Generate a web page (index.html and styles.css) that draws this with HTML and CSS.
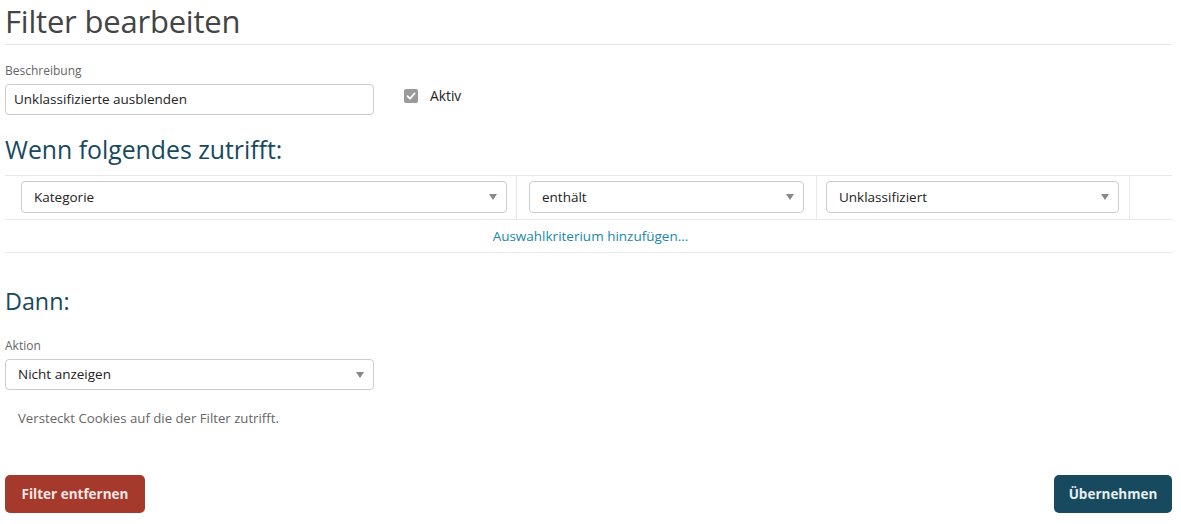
FILE: index.html
```html
<!DOCTYPE html>
<html lang="de">
<head>
<meta charset="utf-8">
<link rel="stylesheet" href="styles.css">
</head>
<body>
<div class="page">
  <h1 class="title">Filter bearbeiten</h1>

  <div class="desc-row">
    <div class="field desc-field">
      <label class="label">Beschreibung</label>
      <div class="input">Unklassifizierte ausblenden</div>
    </div>
    <div class="check">
      <span class="box"><svg width="10" height="10" viewBox="0 0 10 10"><path d="M1.5 5.2 L4 7.6 L8.6 2.4" fill="none" stroke="#fff" stroke-width="1.8" stroke-linecap="round" stroke-linejoin="round"/></svg></span>
      <span class="check-label">Aktiv</span>
    </div>
  </div>

  <h2 class="section when">Wenn folgendes zutrifft:</h2>

  <div class="criteria">
    <div class="crit-row">
      <div class="cell c1"><div class="select">Kategorie<span class="caret"></span></div></div>
      <div class="cell c2"><div class="select">enthält<span class="caret"></span></div></div>
      <div class="cell c3"><div class="select">Unklassifiziert<span class="caret"></span></div></div>
      <div class="cell c4"></div>
    </div>
    <div class="add-row"><span class="link">Auswahlkriterium hinzufügen...</span></div>
  </div>

  <h2 class="section then">Dann:</h2>

  <div class="field action-field">
    <label class="label">Aktion</label>
    <div class="select action">Nicht anzeigen<span class="caret"></span></div>
  </div>

  <p class="help">Versteckt Cookies auf die der Filter zutrifft.</p>

  <div class="buttons">
    <button class="btn danger">Filter entfernen</button>
    <button class="btn primary">Übernehmen</button>
  </div>
</div>
</body>
</html>
```

FILE: styles.css
```css
* { box-sizing: border-box; }
html, body { margin: 0; padding: 0; background: #fff; }
body {
  font-family: "Open Sans", "Noto Sans", "DejaVu Sans", sans-serif;
  color: #222;
}
.page {
  margin-left: 5px;
  width: 1167px;
}
.title {
  margin: 0;
  padding-top: 3px;
  height: 45px;
  font-size: 31px;
  font-weight: 400;
  color: #444;
  line-height: 36px;
  border-bottom: 1px solid #e6e6e6;
  letter-spacing: -0.2px;
}
.desc-row {
  display: flex;
  align-items: flex-start;
  margin-top: 18px;
}
.field { display: flex; flex-direction: column; }
.desc-field { width: 369px; }
.label {
  font-size: 12px;
  color: #666;
  line-height: 16px;
  margin-bottom: 5px;
}
.input {
  height: 31px;
  border: 1px solid #ccc;
  border-radius: 4px;
  padding: 0 8px;
  font-size: 13.5px;
  line-height: 29px;
  color: #222;
}
.check {
  display: flex;
  align-items: center;
  margin-left: 30px;
  margin-top: 23px;
}
.box {
  width: 14px;
  height: 14px;
  border-radius: 2px;
  background: #9a9a9a;
  display: flex;
  align-items: center;
  justify-content: center;
}
.check-label {
  margin-left: 12px;
  font-size: 13.8px;
  color: #222;
}
.section {
  margin: 0;
  font-size: 24.8px;
  font-weight: 400;
  color: #184a5e;
  line-height: 30px;
}
.when { margin-top: 19px; }
.criteria {
  margin-top: 11px;
  border-top: 1px solid #e8e8e8;
}
.crit-row {
  display: grid;
  grid-template-columns: 512px 300px 313px 1fr;
  border-bottom: 1px solid #e8e8e8;
}
.cell { height: 43px; padding-top: 5px; border-right: 1px solid #e8e8e8; }
.cell.c4 { border-right: none; }
.c1 { padding-left: 16px; padding-right: 9px; }
.c2 { padding-left: 12px; padding-right: 12px; }
.c3 { padding-left: 9px; padding-right: 10px; }
.select {
  position: relative;
  height: 32px;
  border: 1px solid #ccc;
  border-radius: 4px;
  padding: 0 12px;
  font-size: 13.5px;
  line-height: 30px;
  color: #222;
}
.caret {
  position: absolute;
  right: 9px;
  top: 12px;
  width: 0;
  height: 0;
  border-left: 4px solid transparent;
  border-right: 4px solid transparent;
  border-top: 6px solid #888;
}
.add-row {
  height: 33px;
  border-bottom: 1px solid #e8e8e8;
  text-align: center;
  padding-top: 7px;
  font-size: 13.5px;
  line-height: 18px;
}
.link { color: #1a87ad; margin-left: 4px; }
.then { margin-top: 33px; font-size: 23.3px; }
.action-field { width: 369px; margin-top: 22px; }
.action-field .label { margin-bottom: 5px; }
.select.action { height: 31px; line-height: 29px; }
.help {
  margin: 19px 0 0 13px;
  font-size: 13.2px;
  color: #666;
  line-height: 18px;
}
.buttons {
  display: flex;
  justify-content: space-between;
  margin-top: 48px;
}
.btn {
  height: 38px;
  border: none;
  border-radius: 5px;
  padding: 0 14px;
  font-family: inherit;
  font-size: 13.5px;
  font-weight: 700;
  color: #f1e6e6;
}
.danger { background: #a53a2c; width: 140px; }
.primary { background: #174a5e; color: #e8eef0; width: 118px; }
```
